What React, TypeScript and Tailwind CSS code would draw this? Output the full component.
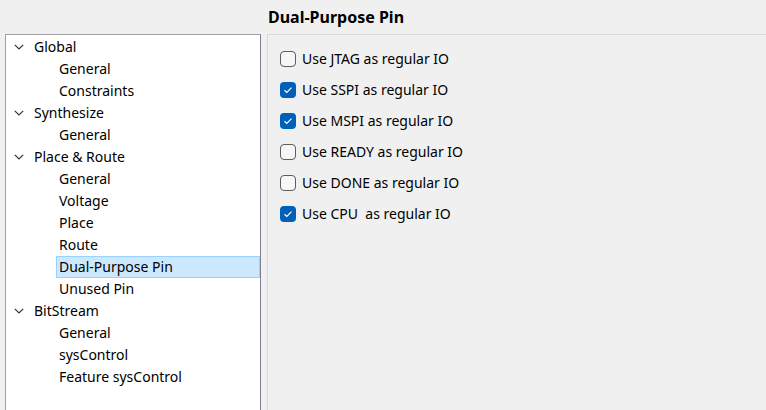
import React from "react";

type Node = { label: string; level: 0 | 1; selected?: boolean };

const tree: Node[] = [
  { label: "Global", level: 0 },
  { label: "General", level: 1 },
  { label: "Constraints", level: 1 },
  { label: "Synthesize", level: 0 },
  { label: "General", level: 1 },
  { label: "Place & Route", level: 0 },
  { label: "General", level: 1 },
  { label: "Voltage", level: 1 },
  { label: "Place", level: 1 },
  { label: "Route", level: 1 },
  { label: "Dual-Purpose Pin", level: 1, selected: true },
  { label: "Unused Pin", level: 1 },
  { label: "BitStream", level: 0 },
  { label: "General", level: 1 },
  { label: "sysControl", level: 1 },
  { label: "Feature sysControl", level: 1 },
];

const options: { label: string; checked: boolean }[] = [
  { label: "Use JTAG as regular IO", checked: false },
  { label: "Use SSPI as regular IO", checked: true },
  { label: "Use MSPI as regular IO", checked: true },
  { label: "Use READY as regular IO", checked: false },
  { label: "Use DONE as regular IO", checked: false },
  { label: "Use CPU\u00a0 as regular IO", checked: true },
];

function Chevron() {
  return (
    <svg width="10" height="6" viewBox="0 0 10 6" className="block">
      <path d="M0.8 0.8 L5 5 L9.2 0.8" fill="none" stroke="#333" strokeWidth="1.2" />
    </svg>
  );
}

function Checkbox({ checked }: { checked: boolean }) {
  if (checked) {
    return (
      <div className="w-[16px] h-[16px] rounded-[4px] bg-[#005fb8] flex items-center justify-center shrink-0">
        <svg width="10" height="8" viewBox="0 0 10 8">
          <path d="M1.5 4.2 L3.8 6.4 L8.5 1.6" fill="none" stroke="#fff" strokeWidth="1.2" />
        </svg>
      </div>
    );
  }
  return <div className="w-[16px] h-[16px] rounded-[4px] border border-[#5d5d5d] bg-[#f7f7f7] shrink-0" />;
}

export default function App() {
  return (
    <div
      className="w-[766px] h-[410px] bg-[#f0f0f0] flex overflow-hidden text-black"
      style={{ fontFamily: '"Noto Sans", "Open Sans", sans-serif' }}
    >
      <div className="w-[267px] pl-[5px] pr-[6px] pt-[34px] flex flex-col shrink-0">
        <div className="flex-1 bg-white border border-[#a0a0a0] border-r-[#7f7f93] pt-[1px] -mb-[2px]">
          {tree.map((n, i) =>
            n.level === 0 ? (
              <div key={i} className="h-[22px] flex items-center text-[14px]">
                <div className="w-[28px] flex justify-end pr-[10px]">
                  <Chevron />
                </div>
                <span className="leading-none">{n.label}</span>
              </div>
            ) : (
              <div key={i} className="h-[22px] flex items-center text-[14px] pl-[50px]">
                <div
                  className={
                    n.selected
                      ? "flex-1 h-[22px] flex items-center bg-[#cce8ff] border border-[#99d1ff] pl-[2px]"
                      : "flex-1 h-[22px] flex items-center pl-[3px]"
                  }
                >
                  <span className="leading-none">{n.label}</span>
                </div>
              </div>
            )
          )}
        </div>
      </div>
      <div className="flex-1 flex flex-col">
        <div className="h-[34px] flex items-center pl-[1px] text-[16px] font-bold">Dual-Purpose Pin</div>
        <div className="flex-1 border-t border-l border-[#d9d9d9] pt-[8px] pl-[12px]">
          {options.map((o, i) => (
            <div key={i} className="h-[31px] flex items-center gap-[6px] text-[14px]">
              <Checkbox checked={o.checked} />
              <span className="leading-none whitespace-pre">{o.label}</span>
            </div>
          ))}
        </div>
      </div>
    </div>
  );
}
